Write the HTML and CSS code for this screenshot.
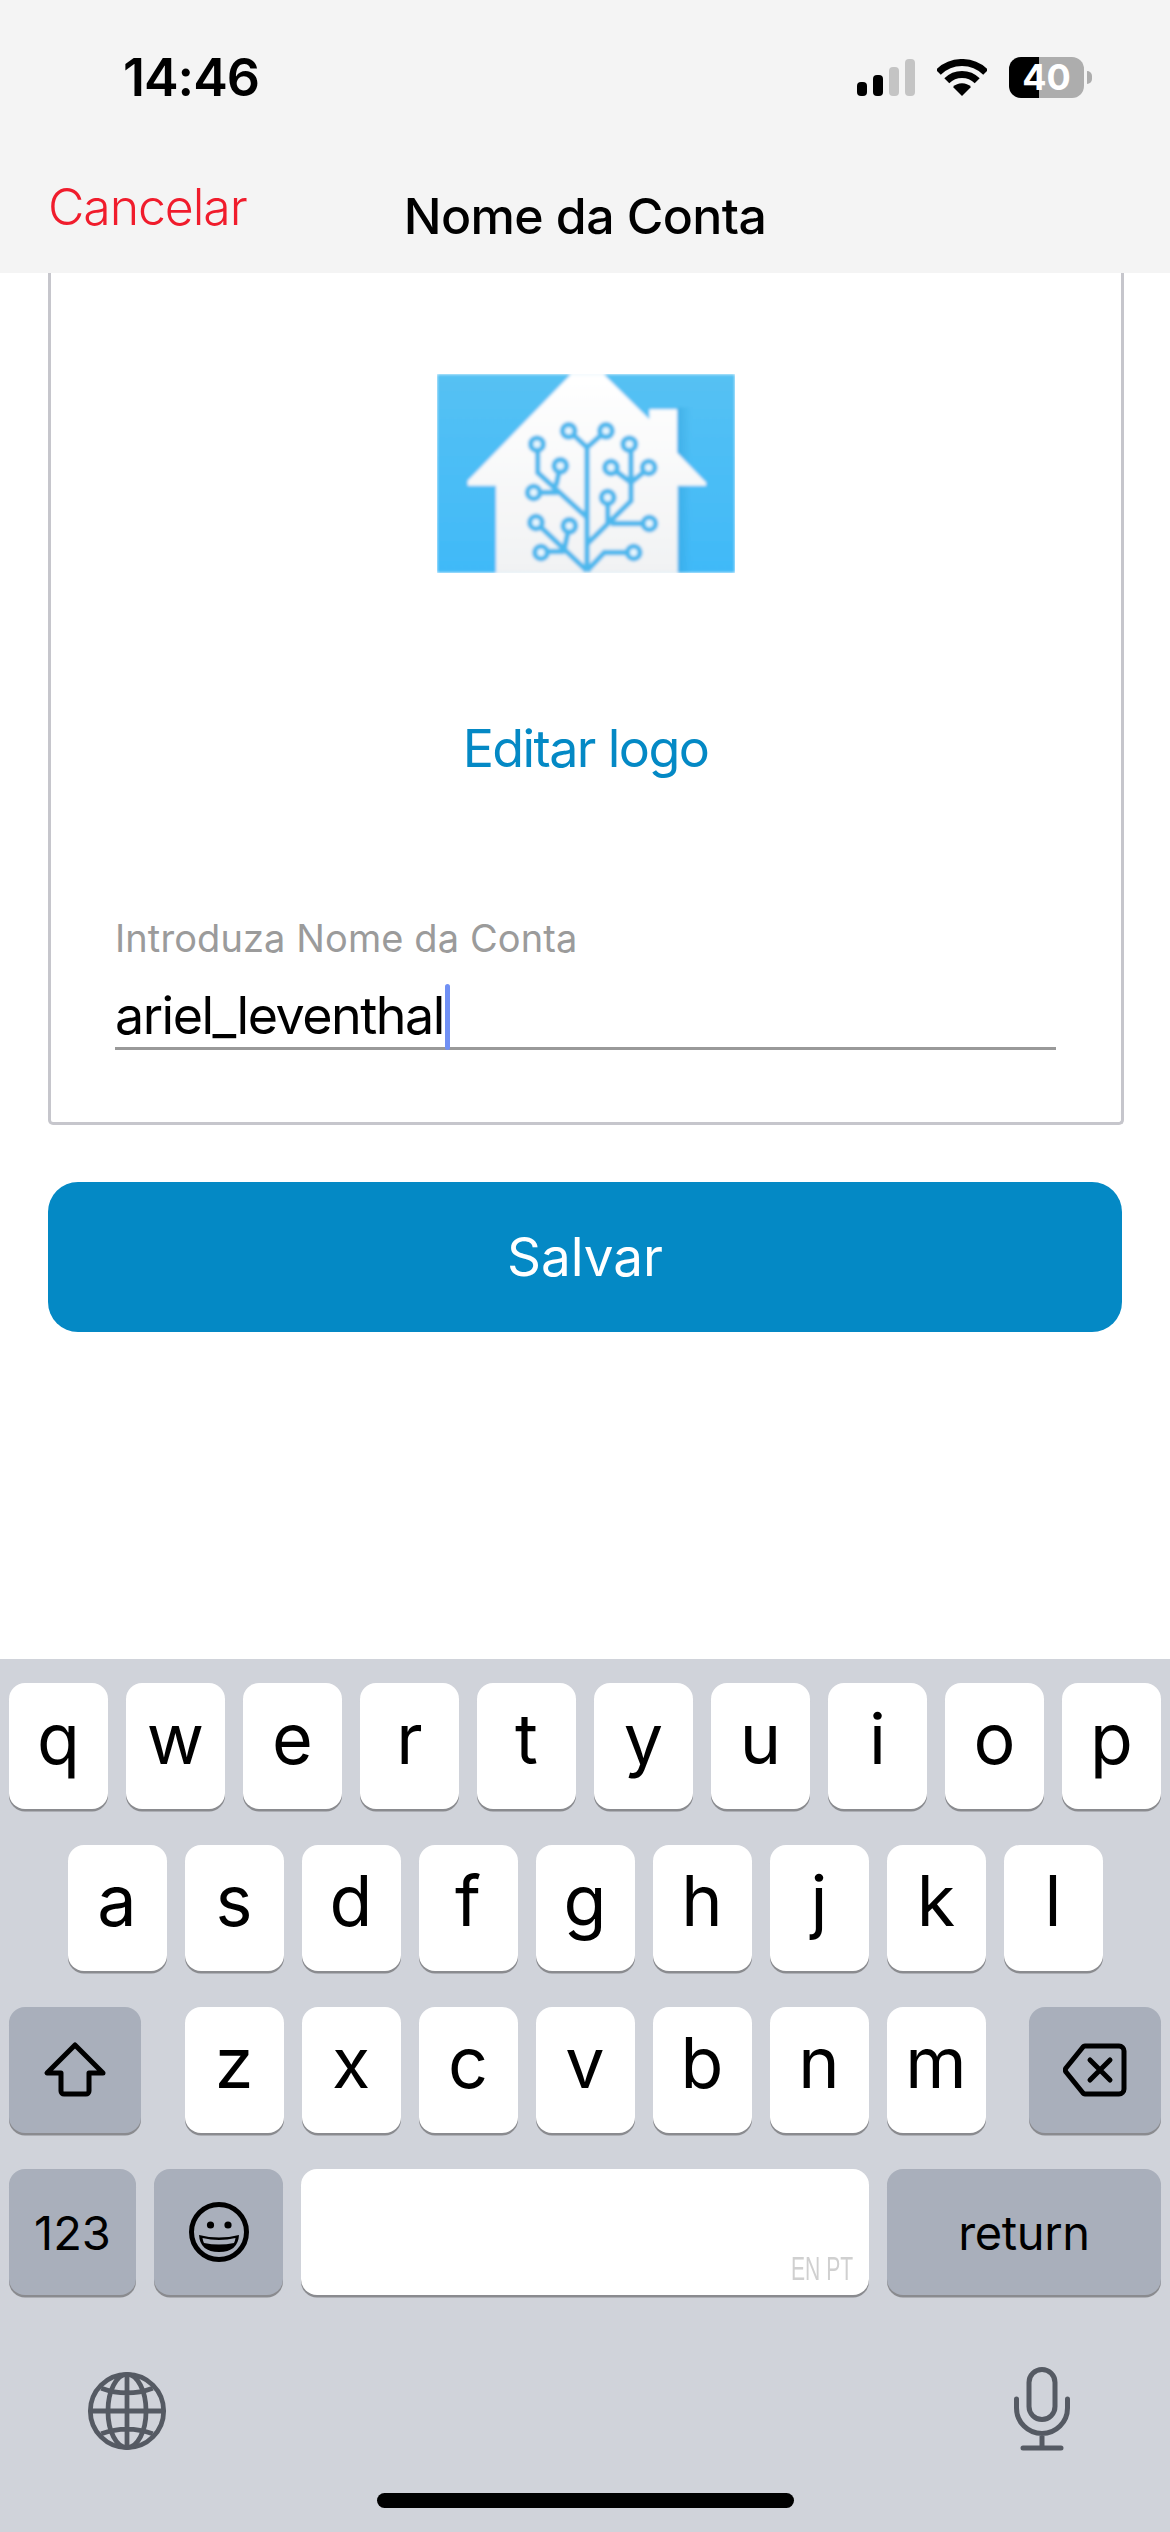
FILE: index.html
```html
<!DOCTYPE html>
<html lang="pt">
<head>
    <meta charset="UTF-8">
    <meta name="viewport" content="width=device-width, initial-scale=1.0">
    <title>Nome da Conta</title>
    <link rel="stylesheet" href="styles.css">
</head>
<body>
    <header class="top">
        <div class="status">
            <span class="clock">14:46</span>
            <div class="status-icons">
                <svg class="signal" width="58" height="37" viewBox="0 0 58 37">
                    <rect x="0" y="23" width="10" height="14" rx="4" fill="#000"/>
                    <rect x="16" y="16" width="10" height="21" rx="4" fill="#000"/>
                    <rect x="32" y="8" width="10" height="29" rx="4" fill="#c4c4c4"/>
                    <rect x="48" y="0" width="10" height="37" rx="4" fill="#c4c4c4"/>
                </svg>
                <svg class="wifi" width="50" height="37" viewBox="0 0 50 37">
                    <path d="M1.3 13.3A33.5 33.5 0 0 1 48.7 13.3" fill="none" stroke="#000" stroke-width="7"/>
                    <path d="M9.8 21.8A21.5 21.5 0 0 1 40.2 21.8" fill="none" stroke="#000" stroke-width="7"/>
                    <path d="M25 37L16 28A12.7 12.7 0 0 1 34 28Z" fill="#000"/>
                </svg>
                <div class="battery">40</div>
            </div>
        </div>
        <div class="nav">
            <span class="cancel">Cancelar</span>
            <span class="nav-title">Nome da Conta</span>
        </div>
    </header>

    <main class="content">
        <section class="card">
            <svg class="logo" width="298" height="199" viewBox="108 100 894 596">
                <defs>
                    <filter id="soft" x="-5%" y="-5%" width="110%" height="110%">
                        <feGaussianBlur stdDeviation="4"/>
                    </filter>
                    <linearGradient id="sky" x1="0" y1="0" x2="0" y2="1">
                        <stop offset="0" stop-color="#55c1f3"/>
                        <stop offset="1" stop-color="#40b9f8"/>
                    </linearGradient>
                    <linearGradient id="wall" x1="0" y1="0" x2="0" y2="1">
                        <stop offset="0" stop-color="#ffffff"/>
                        <stop offset="1" stop-color="#f1f2f3"/>
                    </linearGradient>
                    <linearGradient id="shade" x1="0" y1="0" x2="1" y2="0">
                        <stop offset="0" stop-color="#2f9fd8" stop-opacity="0.45"/>
                        <stop offset="1" stop-color="#2f9fd8" stop-opacity="0"/>
                    </linearGradient>
                </defs>
                <g filter="url(#soft)">
                    <rect x="108" y="100" width="894" height="596" fill="url(#sky)"/>
                    <rect x="830" y="200" width="40" height="496" fill="url(#shade)"/>
                    <path d="M510 100H608L745 235V205H828V335L915 425V435H830V696H285V435H200V420Z" fill="url(#wall)"/>
                    <g fill="none" stroke="#4db8ed" stroke-width="16">
                        <path d="M558 690V320L505 270M558 320L615 270"/>
                        <path d="M558 530L410 395V310M465 435L478 375M470 455H400"/>
                        <path d="M558 610L690 480V310M630 380L690 425L745 380M620 470V545M630 548H745"/>
                        <path d="M558 690L405 545M490 625L505 555M490 632H420M558 690L610 635H695"/>
                    </g>
                    <g fill="#e6f5fd" stroke="#4db8ed" stroke-width="16">
                        <circle cx="503" cy="270" r="19"/>
                        <circle cx="615" cy="270" r="19"/>
                        <circle cx="408" cy="310" r="19"/>
                        <circle cx="685" cy="310" r="19"/>
                        <circle cx="478" cy="375" r="19"/>
                        <circle cx="630" cy="380" r="19"/>
                        <circle cx="743" cy="380" r="19"/>
                        <circle cx="398" cy="455" r="19"/>
                        <circle cx="620" cy="470" r="19"/>
                        <circle cx="405" cy="545" r="19"/>
                        <circle cx="505" cy="555" r="19"/>
                        <circle cx="745" cy="548" r="19"/>
                        <circle cx="420" cy="635" r="19"/>
                        <circle cx="698" cy="635" r="19"/>
                    </g>
                </g>
            </svg>
            <a class="edit-logo">Editar logo</a>
            <label class="field-label">Introduza Nome da Conta</label>
            <div class="field"><span class="field-value">ariel_leventhal</span><span class="caret"></span></div>
        </section>
        <button class="save">Salvar</button>
    </main>

    <footer class="keyboard">
        <div class="row">
            <div class="key letter">q</div>
            <div class="key letter">w</div>
            <div class="key letter">e</div>
            <div class="key letter">r</div>
            <div class="key letter">t</div>
            <div class="key letter">y</div>
            <div class="key letter">u</div>
            <div class="key letter">i</div>
            <div class="key letter">o</div>
            <div class="key letter">p</div>
        </div>
        <div class="row row-center">
            <div class="key letter">a</div>
            <div class="key letter">s</div>
            <div class="key letter">d</div>
            <div class="key letter">f</div>
            <div class="key letter">g</div>
            <div class="key letter">h</div>
            <div class="key letter">j</div>
            <div class="key letter">k</div>
            <div class="key letter">l</div>
        </div>
        <div class="row row-between">
            <div class="key dark side">
                <svg width="64" height="58" viewBox="0 0 64 58">
                    <path d="M32 4L4 32H18V50A3 3 0 0 0 21 53H43A3 3 0 0 0 46 50V32H60Z" fill="none" stroke="#000" stroke-width="5" stroke-linejoin="round"/>
                </svg>
            </div>
            <div class="letters">
                <div class="key letter">z</div>
                <div class="key letter">x</div>
                <div class="key letter">c</div>
                <div class="key letter">v</div>
                <div class="key letter">b</div>
                <div class="key letter">n</div>
                <div class="key letter">m</div>
            </div>
            <div class="key dark side">
                <svg width="64" height="54" viewBox="0 0 64 54">
                    <path d="M22 3H56A5 5 0 0 1 61 8V46A5 5 0 0 1 56 51H22A3 3 0 0 1 20 50L3 29A3.5 3.5 0 0 1 3 25L20 4A3 3 0 0 1 22 3Z" fill="none" stroke="#000" stroke-width="5" stroke-linejoin="round"/>
                    <path d="M27 17L47 37M47 17L27 37" fill="none" stroke="#000" stroke-width="5" stroke-linecap="round"/>
                </svg>
            </div>
        </div>
        <div class="row">
            <div class="key dark small numbers">123</div>
            <div class="key dark emoji">
                <svg width="60" height="60" viewBox="0 0 60 60">
                    <circle cx="30" cy="30" r="27.5" fill="none" stroke="#000" stroke-width="5"/>
                    <circle cx="21.5" cy="23" r="3.6" fill="#000"/>
                    <circle cx="39" cy="23" r="3.6" fill="#000"/>
                    <path d="M10 33Q30 38 50 33Q49 50 30 50Q11 50 10 33Z" fill="#000"/>
                    <path d="M13.5 36Q30 40 46.5 36Q46 39 45 41Q30 44 15 41Q14 39 13.5 36Z" fill="#a9afbb"/>
                </svg>
            </div>
            <div class="key space"><span class="space-langs">EN PT</span></div>
            <div class="key dark small return">return</div>
        </div>
        <div class="bottom-icons">
            <svg width="80" height="80" viewBox="0 0 84 84">
                <g fill="none" stroke="#555a63" stroke-width="5">
                    <circle cx="42" cy="42" r="38.5"/>
                    <ellipse cx="42" cy="42" rx="20" ry="38.5"/>
                    <path d="M42 4V80M4 42H80M15 18Q42 28 69 18M15 66Q42 56 69 66"/>
                </g>
            </svg>
            <svg width="56" height="84" viewBox="0 0 56 84">
                <g fill="none" stroke="#555a63" stroke-width="5" stroke-linecap="round">
                    <rect x="15" y="2.500" width="26" height="50" rx="13"/>
                    <path d="M2.500 32V41A25.500 25.500 0 0 0 53.500 41V32M28 67V81M9 81H47"/>
                </g>
            </svg>
        </div>
        <div class="home-bar"></div>
    </footer>
</body>
</html>
```

FILE: styles.css
```css
* {
    box-sizing: border-box;
}
html, body {
    margin: 0;
    height: 2532px;
    overflow: hidden;
}
body {
    display: flex;
    flex-direction: column;
    background-color: #ffffff;
    font-family: Inter, "Liberation Sans", sans-serif;
    color: #000000;
}

/* top bar */
.top {
    height: 273px;
    background-color: #f4f4f4;
    flex-shrink: 0;
}
.status {
    display: flex;
    justify-content: space-between;
    align-items: flex-start;
    height: 170px;
    padding: 50px 86px 0 123px;
}
.clock {
    font-size: 52px;
    line-height: 56px;
    font-weight: 600;
    letter-spacing: -1px;
}
.status-icons {
    display: flex;
    align-items: center;
    gap: 22px;
    padding-top: 7px;
}
.battery {
    position: relative;
    width: 75px;
    height: 41px;
    border-radius: 12px;
    background: linear-gradient(to right, #000 40%, #adadad 40%);
    color: #ffffff;
    font-size: 36px;
    line-height: 41px;
    font-weight: 700;
    text-align: center;
}
.battery::after {
    content: "";
    position: absolute;
    right: -8px;
    top: 14px;
    width: 5px;
    height: 13px;
    border-radius: 0 5px 5px 0;
    background-color: #adadad;
}
.nav {
    position: relative;
    display: flex;
    justify-content: center;
}
.cancel {
    position: absolute;
    left: 48px;
    top: 7px;
    font-size: 50px;
    line-height: 60px;
    font-weight: 300;
    letter-spacing: -1.1px;
    color: #f01c2c;
}
.nav-title {
    margin-top: 16px;
    font-size: 50px;
    line-height: 60px;
    font-weight: 500;
    letter-spacing: -0.6px;
}

/* form */
.content {
    flex: 1;
    padding: 0 46px 0 48px;
}
.card {
    display: flex;
    flex-direction: column;
    align-items: center;
    height: 852px;
    padding: 101px 65px 0 64px;
    border: 3px solid #c6c6cc;
    border-top: none;
    border-radius: 0 0 5px 5px;
}
.logo {
    display: block;
}
.edit-logo {
    margin-top: 144px;
    font-size: 52px;
    line-height: 64px;
    letter-spacing: -1.6px;
    color: #0489c5;
}
.field-label {
    align-self: stretch;
    margin-top: 133px;
    font-size: 38px;
    line-height: 48px;
    letter-spacing: 0.1px;
    color: #9b9b9b;
}
.field {
    align-self: stretch;
    display: flex;
    align-items: flex-end;
    height: 75px;
    margin-top: 13px;
    border-bottom: 3px solid #999999;
}
.field-value {
    font-size: 52px;
    line-height: 62px;
    letter-spacing: -1.5px;
}
.caret {
    width: 5px;
    height: 66px;
    margin-left: 1px;
    margin-bottom: -3px;
    border-radius: 3px;
    background-color: #7090f4;
}
.save {
    display: block;
    width: 1074px;
    height: 150px;
    margin-top: 57px;
    border: none;
    border-radius: 30px;
    background-color: #0489c5;
    color: #ffffff;
    font-family: inherit;
    font-size: 53px;
}

/* keyboard */
.keyboard {
    flex-shrink: 0;
    height: 873px;
    padding: 24px 9px 0;
    background-color: #d0d3da;
}
.row {
    display: flex;
    gap: 18px;
    height: 126px;
    margin-bottom: 36px;
}
.row-center {
    justify-content: center;
}
.row-between {
    justify-content: space-between;
}
.letters {
    display: flex;
    gap: 18px;
}
.key {
    display: flex;
    align-items: center;
    justify-content: center;
    flex-shrink: 0;
    width: 99px;
    height: 126px;
    border-radius: 16px;
    background-color: #ffffff;
    box-shadow: 0 2.500px 0 #8a8b8f;
}
.letter {
    padding-bottom: 14px;
    font-size: 70px;
    font-weight: 400;
    line-height: 80px;
}
.dark {
    background-color: #a9afbb;
}
.side {
    width: 132px;
}
.small {
    font-size: 47px;
}
.numbers {
    width: 127px;
}
.emoji {
    width: 129px;
}
.space {
    position: relative;
    width: 568px;
}
.space-langs {
    position: absolute;
    right: 16px;
    bottom: 7px;
    font-family: "Liberation Sans", sans-serif;
    font-size: 34px;
    line-height: 40px;
    color: #d0d0d0;
    transform: scaleX(0.62);
    transform-origin: right center;
}
.return {
    width: 274px;
    letter-spacing: -0.4px;
}
.bottom-icons {
    display: flex;
    justify-content: space-between;
    align-items: flex-end;
    height: 84px;
    margin-top: 72px;
    padding: 0 91px 0 78px;
}
.home-bar {
    width: 417px;
    height: 15px;
    margin: 42px auto 0;
    border-radius: 8px;
    background-color: #000000;
}
```
